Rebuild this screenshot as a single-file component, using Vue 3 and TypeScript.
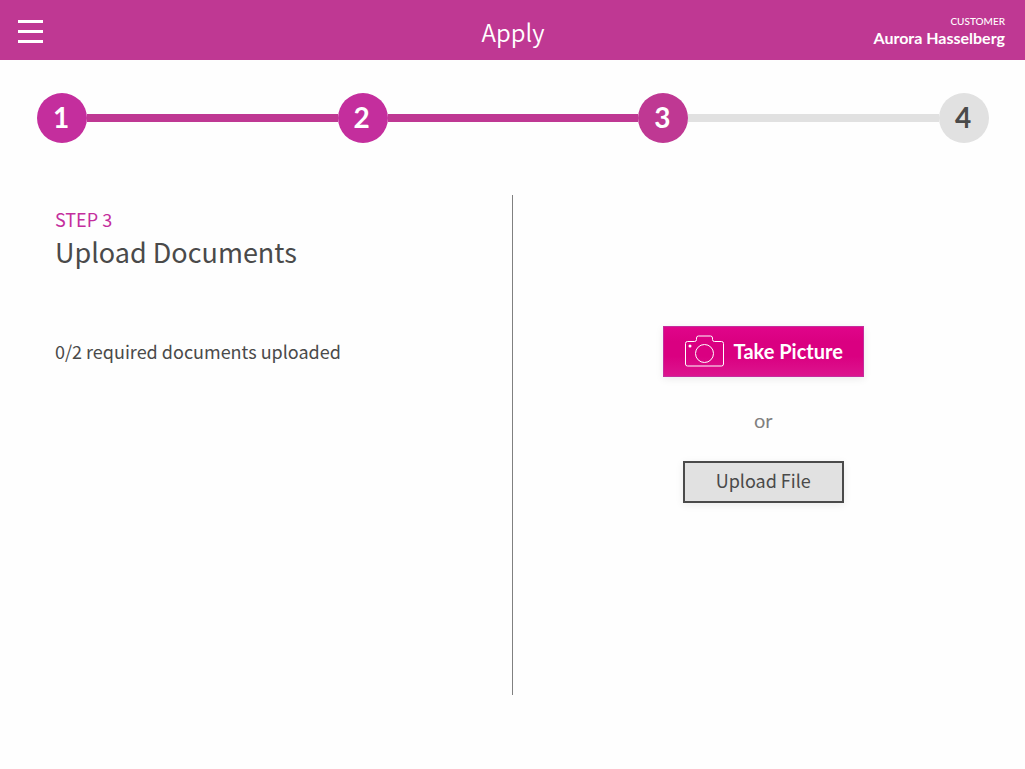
<script setup lang="ts">
interface Step {
  number: number
  tone: 'done' | 'current' | 'pending'
}

const steps: Step[] = [
  { number: 1, tone: 'done' },
  { number: 2, tone: 'done' },
  { number: 3, tone: 'current' },
  { number: 4, tone: 'pending' },
]

const uploaded = 0
const required = 2
</script>

<template>
  <div class="page">
    <header class="bar">
      <button class="menu" type="button" aria-label="Menu">
        <span class="menu-line"></span>
        <span class="menu-line"></span>
        <span class="menu-line"></span>
      </button>
      <h1 class="title">Apply</h1>
      <div class="customer">
        <span class="customer-label">CUSTOMER</span>
        <span class="customer-name">Aurora Hasselberg</span>
      </div>
    </header>

    <nav class="stepper" aria-label="Progress">
      <template v-for="step in steps" :key="step.number">
        <span v-if="step.number > 1" class="link" :class="step.tone"></span>
        <span class="step" :class="step.tone">{{ step.number }}</span>
      </template>
    </nav>

    <main class="content">
      <section class="info">
        <p class="eyebrow">STEP 3</p>
        <h2 class="heading">Upload Documents</h2>
        <p class="status">{{ uploaded }}/{{ required }} required documents uploaded</p>
      </section>
      <section class="actions">
        <button class="take" type="button">
          <svg class="camera" viewBox="0 0 40 32" width="40" height="32" aria-hidden="true">
            <path
              d="M3.500 6.500H10.500Q12.500 6.500 12.500 4.500V3Q12.500 1 14.500 1H26.500Q28.500 1 28.500 3V4.500Q28.500 6.500 30.500 6.500H37.500Q39.500 6.500 39.500 8.500V29Q39.500 31 37.500 31H3.500Q1.500 31 1.500 29V8.500Q1.500 6.500 3.500 6.500Z"
            />
            <circle cx="20.500" cy="18.500" r="9" />
            <circle class="dot" cx="6" cy="11" r="1.500" />
          </svg>
          <span>Take Picture</span>
        </button>
        <p class="or">or</p>
        <button class="upload" type="button">Upload File</button>
      </section>
    </main>
  </div>
</template>

<style>
body {
  margin: 0;
  background: #fefefe;
}
</style>

<style scoped>
.page {
  display: flex;
  flex-direction: column;
  min-height: 100vh;
  color: #4a4a4a;
  font-family: "Noto Sans CJK JP", "Noto Sans", sans-serif;
}

.bar {
  display: grid;
  grid-template-columns: 1fr auto 1fr;
  align-items: center;
  height: 60px;
  padding: 0 20px 0 18px;
  background: #bf3893;
  color: #fff;
  font-family: Lato, sans-serif;
}

.menu {
  display: flex;
  flex-direction: column;
  gap: 7px;
  width: 25px;
  padding: 3px 0 0;
  border: 0;
  background: none;
  cursor: pointer;
}

.menu-line {
  width: 100%;
  height: 3px;
  background: #fff;
}

.title {
  margin: 0;
  padding: 4px 0 0 3px;
  font-family: "Noto Sans CJK JP", sans-serif;
  font-size: 24px;
  font-weight: 350;
  line-height: 32px;
}

.customer {
  display: flex;
  flex-direction: column;
  align-items: flex-end;
  padding-top: 2px;
}

.customer-label {
  font-size: 10px;
  font-weight: 500;
  line-height: 14px;
}

.customer-name {
  font-size: 16px;
  font-weight: 700;
  line-height: 20px;
}

.stepper {
  display: flex;
  align-items: center;
  margin: 33px 36px 0 37px;
}

.step {
  display: flex;
  box-sizing: border-box;
  flex: none;
  align-items: center;
  justify-content: center;
  width: 50px;
  height: 50px;
  padding: 0 2px 2px 0;
  border-radius: 50%;
  color: #fff;
  font-family: Lato, sans-serif;
  font-size: 28px;
  font-weight: 700;
  line-height: 48px;
}

.step.done {
  background: #c42e9d;
}

.step.current {
  background: #bf3893;
}

.step.pending {
  background: #e1e1e1;
  color: #4a4a4a;
}

.link {
  flex: 1;
  height: 8px;
  background: #bf3893;
}

.link.pending {
  background: #e1e1e1;
}

.content {
  display: grid;
  grid-template-columns: 1fr 1fr;
  flex: 1;
  margin: 52px 0 74px;
}

.info {
  padding: 12px 24px 0 55px;
  border-right: 1px solid #808080;
}

.eyebrow,
.heading,
.status,
.or {
  margin: 0;
}

.eyebrow {
  color: #c42e9d;
  font-size: 18px;
  line-height: 24px;
}

.heading {
  font-size: 27px;
  font-weight: 400;
  line-height: 42px;
}

.status {
  margin-top: 66px;
  font-size: 18px;
  line-height: 24px;
}

.actions {
  display: flex;
  flex-direction: column;
  align-items: center;
  padding: 131px 11px 0 0;
}

.take {
  display: flex;
  align-items: center;
  justify-content: center;
  gap: 10px;
  width: 201px;
  height: 51px;
  padding: 0 0 2px;
  border: 1px solid #c42e9d;
  background: linear-gradient(#e0058a, #da0081 30%, #da0081 60%, #dc158e);
  box-shadow: 0 2px 8px rgba(0, 0, 0, 0.08);
  color: #fff;
  font-family: Lato, sans-serif;
  font-size: 20px;
  font-weight: 700;
  line-height: 24px;
  cursor: pointer;
}

.camera {
  flex: none;
  fill: none;
  stroke: #fff;
  stroke-width: 1;
}

.dot {
  fill: #fff;
  stroke: none;
}

.or {
  margin-top: 31px;
  color: #808080;
  font-family: Lato, sans-serif;
  font-size: 20px;
  line-height: 24px;
}

.upload {
  width: 161px;
  height: 42px;
  margin-top: 29px;
  padding: 0 0 4px;
  border: 2px solid #4a4a4a;
  background: #e1e1e1;
  box-shadow: 0 2px 8px rgba(0, 0, 0, 0.08);
  color: #4a4a4a;
  font-family: inherit;
  font-size: 18px;
  line-height: 24px;
  cursor: pointer;
}
</style>
